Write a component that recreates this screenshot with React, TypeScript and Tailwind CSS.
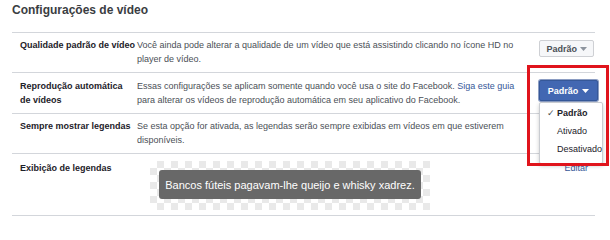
import React from "react";

function Caret({ color }: { color: string }) {
  return (
    <svg width="7" height="4" viewBox="0 0 7 4" className="shrink-0">
      <path d="M0 0 L7 0 L3.5 4 Z" fill={color} />
    </svg>
  );
}

export default function App() {
  return (
    <div className="relative w-[610px] h-[219px] overflow-hidden bg-white font-['Liberation_Sans',Arial,sans-serif] text-[9px] leading-[14px] text-[#4b4f56]">
      <div className="pl-[12px] pr-[15px]">
        <h2 className="pt-[3px] pb-[15px] text-[12px] leading-[14px] font-bold text-[#3a3d42]">
          Configurações de vídeo
        </h2>

        {/* Row 1 */}
        <div className="flex border-t border-[#d3d6db] pt-[5px] pb-[6px]">
          <div className="w-[125px] shrink-0 pl-[8px] font-bold text-[#1d2129]">
            Qualidade padrão de vídeo
          </div>
          <div className="w-[390px] shrink-0">
            Você ainda pode alterar a qualidade de um vídeo que está assistindo clicando no ícone HD no player de vídeo.
          </div>
          <div className="flex flex-1 justify-end pr-[1px]">
            <div className="mt-[2px] flex h-[17px] items-center gap-[3px] rounded-[2px] border border-[#ced0d4] bg-[#f6f7f9] px-[6px] font-bold text-[#4b4f56]">
              <span>Padrão</span>
              <Caret color="#8d949e" />
            </div>
          </div>
        </div>

        {/* Row 2 */}
        <div className="flex border-t border-[#d3d6db] pt-[6px] pb-[6px]">
          <div className="w-[125px] shrink-0 pl-[8px] pr-[4px] font-bold text-[#1d2129]">
            Reprodução automática de vídeos
          </div>
          <div className="w-[390px] shrink-0">
            Essas configurações se aplicam somente quando você usa o site do Facebook.{" "}
            <span className="text-[#365899]">Siga este guia</span> para alterar os vídeos de reprodução automática em seu aplicativo do Facebook.
          </div>
          <div className="flex flex-1 justify-end mr-[-3px]">
            <div className="mt-[1px] flex h-[21px] w-[59px] items-center justify-center gap-[4px] rounded-[2px] border border-[#365899] bg-[#4267b2] font-bold text-white shadow-[0_0_0_1px_#8b9dc3]">
              <span>Padrão</span>
              <Caret color="#ffffff" />
            </div>
          </div>
        </div>

        {/* Row 3 */}
        <div className="flex border-t border-[#d3d6db] pt-[5px] pb-[6px]">
          <div className="w-[125px] shrink-0 pl-[8px] font-bold text-[#1d2129]">
            Sempre mostrar legendas
          </div>
          <div className="w-[390px] shrink-0">
            Se esta opção for ativada, as legendas serão sempre exibidas em vídeos em que estiverem disponíveis.
          </div>
          <div className="flex-1" />
        </div>

        {/* Row 4 */}
        <div className="flex border-t border-b border-[#d3d6db] pt-[7px] pb-[5px]">
          <div className="w-[125px] shrink-0 pl-[8px] font-bold text-[#1d2129]">
            Exibição de legendas
          </div>
          <div className="w-[390px] shrink-0 pl-[13px]">
            <div className="w-[280px] h-[49px] bg-[conic-gradient(#e9e9e9_25%,#ffffff_0_50%,#e9e9e9_0_75%,#ffffff_0)] bg-[length:14px_14px] px-[9px] pt-[9px]">
              <div className="flex h-[29px] items-center justify-center rounded-[3px] bg-[#686868] text-[11px] text-white">
                Bancos fúteis pagavam-lhe queijo e whisky xadrez.
              </div>
            </div>
          </div>
          <div className="flex flex-1 justify-end pr-[7px]">
            <span className="text-[#365899]">Editar</span>
          </div>
        </div>
      </div>

      {/* Dropdown menu */}
      <div className="absolute left-[539px] top-[102px] w-[64px] rounded-[2px] border border-[#c9ccd1] bg-white pt-[1px] pb-[5px] shadow-[0_2px_4px_rgba(0,0,0,0.2)] text-[#1d2129]">
        <div className="flex h-[18px] items-center">
          <span className="w-[17px] pl-[7px] text-[9px] text-[#4b4f56]">✓</span>
          <span className="font-bold">Padrão</span>
        </div>
        <div className="flex h-[18px] items-center pl-[17px]">Ativado</div>
        <div className="flex h-[18px] items-center pl-[17px]">Desativado</div>
      </div>

      {/* Red highlight */}
      <div className="absolute left-[527px] top-[65px] w-[82px] h-[101px] border-[3px] border-[#e0141c]" />
    </div>
  );
}
